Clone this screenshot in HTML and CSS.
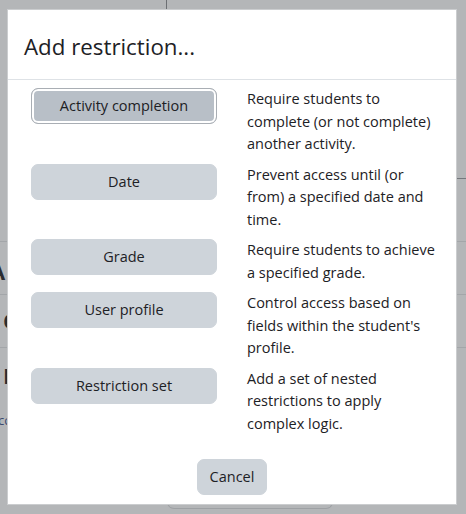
FILE: index.html
```html
<!DOCTYPE html>
<html lang="en">
<head>
<meta charset="utf-8">
<title>Add restriction</title>
<link rel="stylesheet" href="styles.css">
</head>
<body>
<div class="page-behind">
  <div class="bg-vline"></div>
  <div class="bg-left">
    <div class="bg-hline l1"></div>
    <div class="bg-hline l2"></div>
    <div class="bg-hline l3"></div>
    <span class="bg-glyph g1">A</span>
    <span class="bg-glyph g2">C</span>
    <span class="bg-glyph g3">I</span>
    <span class="bg-glyph g4">cc</span>
  </div>
  <div class="bg-right">
    <div class="bg-hline r0"></div>
    <div class="bg-hline l1"></div>
    <div class="bg-hline l2"></div>
    <div class="bg-hline l3"></div>
  </div>
  <div class="bg-bottom"></div>
</div>

<div class="modal">
  <div class="modal-header">
    <h5 class="modal-title">Add restriction...</h5>
  </div>
  <div class="modal-body">
    <div class="opt-row">
      <button class="btn btn-focus">Activity completion</button>
      <div class="opt-desc">Require students to complete (or not complete) another activity.</div>
    </div>
    <div class="opt-row">
      <button class="btn">Date</button>
      <div class="opt-desc">Prevent access until (or from) a specified date and time.</div>
    </div>
    <div class="opt-row">
      <button class="btn">Grade</button>
      <div class="opt-desc">Require students to achieve a specified grade.</div>
    </div>
    <div class="opt-row">
      <button class="btn">User profile</button>
      <div class="opt-desc">Control access based on fields within the student's profile.</div>
    </div>
    <div class="opt-row">
      <button class="btn">Restriction set</button>
      <div class="opt-desc">Add a set of nested restrictions to apply complex logic.</div>
    </div>
  </div>
  <div class="modal-footer">
    <button class="btn">Cancel</button>
  </div>
</div>
</body>
</html>
```

FILE: styles.css
```css
html, body {
  margin: 0;
  padding: 0;
}
body {
  width: 466px;
  height: 514px;
  overflow: hidden;
  background: #b4b6b8;
  font-family: "Open Sans", "Liberation Sans", sans-serif;
  color: #1d2125;
  position: relative;
}

/* page content showing through the backdrop */
.page-behind {
  position: absolute;
  inset: 0;
}
.bg-vline {
  position: absolute;
  left: 166px;
  top: 0;
  width: 1px;
  height: 10px;
  background: #6c6f73;
}
.bg-left, .bg-right {
  position: absolute;
  top: 0;
  height: 514px;
  overflow: hidden;
}
.bg-left { left: 0; width: 8px; }
.bg-right { left: 456px; width: 10px; }
.bg-hline {
  position: absolute;
  left: 0;
  right: 0;
  height: 1px;
  background: #a3a6a9;
}
.bg-hline.l1 { top: 241px; }
.bg-hline.l2 { top: 294px; }
.bg-hline.l3 { top: 347px; }
.bg-hline.r0 { top: 178px; background: #75787d; }
.bg-glyph {
  position: absolute;
  color: #2b2d30;
  font-weight: 700;
  line-height: 1;
}
.g1 { left: -10px; top: 260px; font-size: 22px; }
.g2 { left: 3px; top: 309px; font-size: 22px; }
.g3 { left: 3px; top: 364px; font-size: 22px; }
.g4 { left: -2px; top: 414px; font-size: 13px; font-weight: 400; color: #3a4a70; }
.bg-bottom {
  position: absolute;
  left: 167px;
  top: 502px;
  width: 164px;
  height: 6px;
  border: 1px solid #9ea1a4;
  border-top: none;
  border-radius: 0 0 7px 7px;
}

/* modal */
.modal {
  position: relative;
  margin: 9px 0 0 7px;
  width: 450px;
  height: 496px;
  box-sizing: border-box;
  background: #fff;
  border: 1px solid #cbcdcf;
  display: flex;
  flex-direction: column;
}
.modal-header {
  padding: 22px 16px 18px;
  border-bottom: 1px solid #dee2e6;
}
.modal-title {
  margin: 0;
  font-size: 22.3px;
  font-weight: 400;
  line-height: 29px;
}
.modal-body {
  padding: 8px 20px 0 23px;
}
.opt-row {
  display: grid;
  grid-template-columns: 186px 1fr;
  column-gap: 30px;
  align-items: start;
  margin-bottom: 8px;
}
.opt-desc {
  font-size: 14.5px;
  line-height: 22.5px;
}
.btn {
  font-family: inherit;
  font-size: 14.5px;
  line-height: 22.5px;
  color: #1d2125;
  background: #ced4da;
  border: 1px solid #ced4da;
  border-radius: 7px;
  padding: 6px 12px;
  height: 36px;
  box-sizing: border-box;
  cursor: pointer;
}
.opt-row .btn {
  width: 186px;
}
.btn-focus {
  background: #b8bfc7;
  border-color: #a9aeb4;
  box-shadow: inset 0 0 0 2px #fff;
}
.modal-footer {
  display: flex;
  justify-content: center;
  padding: 16px 16px 10px;
}
```
